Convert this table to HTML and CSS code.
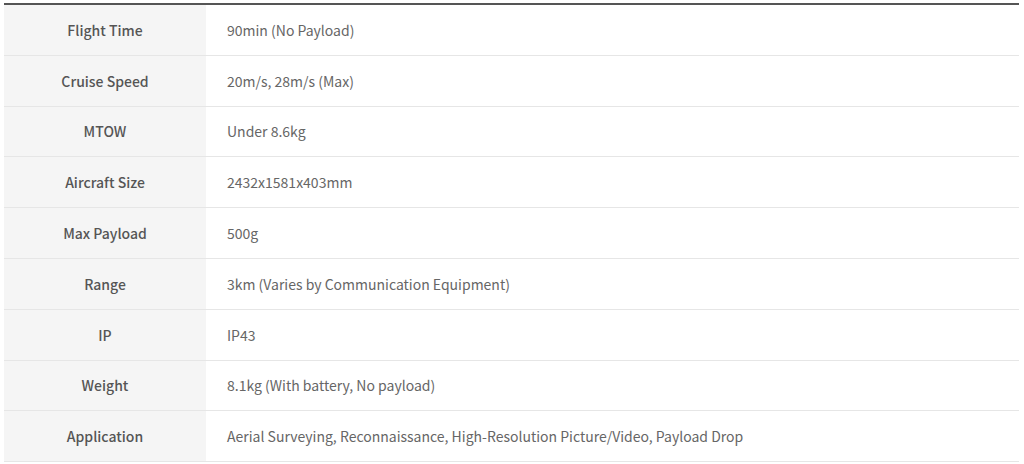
FILE: index.html
```html
<!DOCTYPE html>
<html>
<head>
<meta charset="utf-8">
<link rel="stylesheet" href="styles.css">
</head>
<body>
<table class="spec">
<tbody>
<tr><th>Flight Time</th><td>90min (No Payload)</td></tr>
<tr><th>Cruise Speed</th><td>20m/s, 28m/s (Max)</td></tr>
<tr><th>MTOW</th><td>Under 8.6kg</td></tr>
<tr><th>Aircraft Size</th><td>2432x1581x403mm</td></tr>
<tr><th>Max Payload</th><td>500g</td></tr>
<tr><th>Range</th><td>3km (Varies by Communication Equipment)</td></tr>
<tr><th>IP</th><td>IP43</td></tr>
<tr><th>Weight</th><td>8.1kg (With battery, No payload)</td></tr>
<tr><th>Application</th><td>Aerial Surveying, Reconnaissance, High-Resolution Picture/Video, Payload Drop</td></tr>
</tbody>
</table>
</body>
</html>
```
FILE: styles.css
```css
html, body {
  margin: 0;
  padding: 0;
  background: #fff;
}
body {
  padding: 3px 5px 0 4px;
  font-family: "Noto Sans CJK KR", "Noto Sans", sans-serif;
}
.spec {
  width: 100%;
  border-collapse: collapse;
  border-top: 2px solid #555;
  font-size: 14px;
  color: #555;
}
.spec th, .spec td {
  height: 49.8px;
  padding: 0;
  border-bottom: 1px solid #e6e6e6;
  vertical-align: middle;
}
.spec th {
  width: 202px;
  background: #f5f5f5;
  font-weight: 500;
  text-align: center;
}
.spec td {
  padding-left: 21px;
  text-align: left;
  font-weight: 400;
  color: #666;
}
```
